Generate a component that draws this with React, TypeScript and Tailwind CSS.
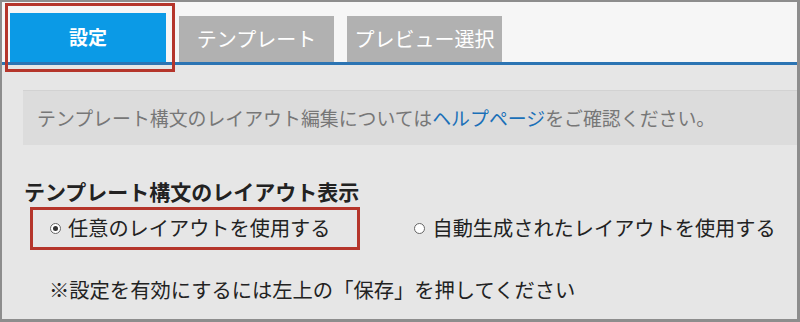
export default function App() {
  return (
    <div
      className="relative h-[322px] w-[800px] overflow-hidden border-2 border-r-[3px] border-b-[3px] border-[#8d8d8d] bg-[#e6e6e6] text-[#222]"
      style={{ fontFamily: '"Noto Sans CJK JP", "Noto Sans", sans-serif' }}
    >
      {/* tabs */}
      <div className="flex h-[63px] items-end gap-[13px] border-b-[3px] border-[#2b74b3] bg-[#f6f6f6] pl-[8px]">
        <div className="flex h-[49px] w-[156px] items-center justify-center bg-[#0b9ae6] text-[19px] font-bold text-white">
          設定
        </div>
        <div className="flex h-[46px] w-[155px] items-center justify-center bg-[#b1b1b1] text-[20px] text-white">
          テンプレート
        </div>
        <div className="flex h-[46px] w-[155px] items-center justify-center bg-[#b1b1b1] text-[20px] text-white">
          プレビュー選択
        </div>
      </div>

      {/* info */}
      <div className="ml-[21px] mt-[25px] flex h-[55px] items-center border-t border-[#d2d2d2] bg-[#dcdcdc] pl-[14px] text-[18.9px] text-[#777]">
        テンプレート構文のレイアウト編集については
        <span className="text-[#1a70b8]">ヘルプページ</span>
        をご確認ください。
      </div>

      {/* layout setting */}
      <div className="ml-[22px] mt-[33px] text-[21px] font-bold leading-[26px] text-[#222]">
        テンプレート構文のレイアウト表示
      </div>
      <div className="mt-[11px] flex h-[26px] items-center text-[20.2px] leading-[26px] text-[#222]">
        <div className="ml-[48px] flex items-center gap-[7px]">
          <span className="flex h-[11px] w-[11px] items-center justify-center rounded-full border border-[#666] bg-white">
            <span className="h-[5px] w-[5px] rounded-full bg-[#333]" />
          </span>
          <span>任意のレイアウトを使用する</span>
        </div>
        <div className="ml-[84px] flex items-center gap-[7px]">
          <span className="h-[11px] w-[11px] rounded-full border border-[#666] bg-white" />
          <span>自動生成されたレイアウトを使用する</span>
        </div>
      </div>
      <div className="ml-[47px] mt-[35px] text-[20.3px] leading-[26px] text-[#222]">
        ※設定を有効にするには左上の「保存」を押してください
      </div>

      {/* highlight boxes */}
      <div className="absolute left-[3px] top-[1px] h-[69px] w-[170px] border-[3px] border-[#b5352b]" />
      <div className="absolute left-[28px] top-[205px] h-[43px] w-[330px] border-[3px] border-[#b5352b]" />
    </div>
  );
}
